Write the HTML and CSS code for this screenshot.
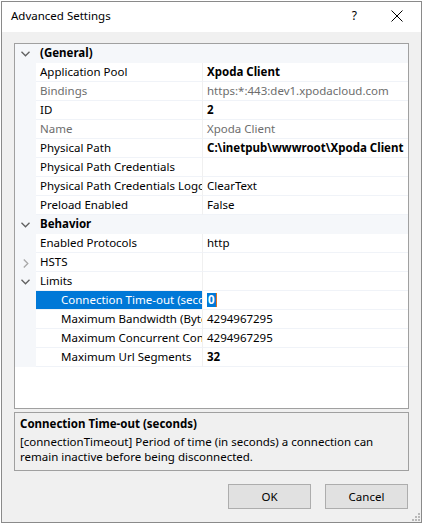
FILE: index.html
```html
<!DOCTYPE html>
<html>
<head>
<meta charset="utf-8">
<link rel="stylesheet" href="styles.css">
</head>
<body>
<div class="window">
  <div class="titlebar">
    <span class="title">Advanced Settings</span>
    <span class="help">?</span>
    <svg class="close" width="12" height="12" viewBox="0 0 12 12"><path d="M0.5 0.5L11.5 11.5M11.5 0.5L0.5 11.5" stroke="#000" stroke-width="1" fill="none"/></svg>
  </div>
  <div class="body">
    <div class="grid">
      <div class="row cat"><span class="gut"><svg class="chev" width="9" height="6" viewBox="0 0 9 6"><path d="M0.5 0.8L4.5 4.8L8.5 0.8" stroke="#606060" stroke-width="1.3" fill="none"/></svg></span><span class="cname">(General)</span></div>
      <div class="row"><span class="gut"></span><span class="name">Application Pool</span><span class="val b">Xpoda Client</span></div>
      <div class="row ro"><span class="gut"></span><span class="name">Bindings</span><span class="val">https:*:443:dev1.xpodacloud.com</span></div>
      <div class="row"><span class="gut"></span><span class="name">ID</span><span class="val b">2</span></div>
      <div class="row ro"><span class="gut"></span><span class="name">Name</span><span class="val">Xpoda Client</span></div>
      <div class="row"><span class="gut"></span><span class="name">Physical Path</span><span class="val b">C:\inetpub\wwwroot\Xpoda Client</span></div>
      <div class="row"><span class="gut"></span><span class="name">Physical Path Credentials</span><span class="val"></span></div>
      <div class="row"><span class="gut"></span><span class="name">Physical Path Credentials Logon Type</span><span class="val">ClearText</span></div>
      <div class="row"><span class="gut"></span><span class="name">Preload Enabled</span><span class="val">False</span></div>
      <div class="row cat"><span class="gut"><svg class="chev" width="9" height="6" viewBox="0 0 9 6"><path d="M0.5 0.8L4.5 4.8L8.5 0.8" stroke="#606060" stroke-width="1.3" fill="none"/></svg></span><span class="cname">Behavior</span></div>
      <div class="row"><span class="gut"></span><span class="name">Enabled Protocols</span><span class="val">http</span></div>
      <div class="row"><span class="gut"><svg class="chevr" width="6" height="9" viewBox="0 0 6 9"><path d="M0.8 0.5L4.8 4.5L0.8 8.5" stroke="#a8a8a8" stroke-width="1.3" fill="none"/></svg></span><span class="name">HSTS</span><span class="val"></span></div>
      <div class="row"><span class="gut"><svg class="chev" width="9" height="6" viewBox="0 0 9 6"><path d="M0.5 0.8L4.5 4.8L8.5 0.8" stroke="#606060" stroke-width="1.3" fill="none"/></svg></span><span class="name">Limits</span><span class="val"></span></div>
      <div class="row sel"><span class="gut"></span><span class="name sub">Connection Time-out (seconds)</span><span class="val"><span class="edit">0</span><span class="caret"></span></span></div>
      <div class="row"><span class="gut"></span><span class="name sub">Maximum Bandwidth (Bytes/second)</span><span class="val">4294967295</span></div>
      <div class="row"><span class="gut"></span><span class="name sub">Maximum Concurrent Connections</span><span class="val">4294967295</span></div>
      <div class="row"><span class="gut"></span><span class="name sub">Maximum Url Segments</span><span class="val b">32</span></div>
    </div>
    <div class="desc">
      <div class="dtitle">Connection Time-out (seconds)</div>
      <div class="dtext">[connectionTimeout] Period of time (in seconds) a connection can remain inactive before being disconnected.</div>
    </div>
    <div class="buttons">
      <button class="btn">OK</button>
      <button class="btn">Cancel</button>
    </div>
    <svg class="grip" width="8" height="8" viewBox="0 0 8 8">
      <rect x="6" y="0" width="2" height="2" fill="#b8b8b8"/>
      <rect x="3" y="3" width="2" height="2" fill="#b8b8b8"/>
      <rect x="6" y="3" width="2" height="2" fill="#b8b8b8"/>
      <rect x="0" y="6" width="2" height="2" fill="#b8b8b8"/>
      <rect x="3" y="6" width="2" height="2" fill="#b8b8b8"/>
      <rect x="6" y="6" width="2" height="2" fill="#b8b8b8"/>
    </svg>
  </div>
</div>
</body>
</html>
```
FILE: styles.css
```css
html, body {
  margin: 0;
  padding: 0;
  background: #ffffff;
}
body {
  font-family: "Noto Sans", "Open Sans", sans-serif;
  font-size: 11.5px;
  color: #000;
  padding: 1px 0 0 1px;
}
.window {
  width: 421px;
  height: 522px;
  box-sizing: border-box;
  border: 1px solid #8a8a8a;
  background: #f0f0f0;
  display: flex;
  flex-direction: column;
}
.titlebar {
  height: 30px;
  box-sizing: border-box;
  padding-bottom: 3px;
  background: #ffffff;
  display: flex;
  align-items: center;
  flex-shrink: 0;
}
.title {
  margin-left: 9px;
  font-size: 11.5px;
  flex: 1;
}
.help {
  font-size: 12px;
  margin-right: 34px;
}
.close {
  margin-right: 18px;
}
.body {
  flex: 1;
  position: relative;
  padding: 11px 12px 0 12px;
  display: flex;
  flex-direction: column;
}
.grid {
  height: 366px;
  box-sizing: border-box;
  border: 1px solid #a0a0a0;
  background: #ffffff;
  display: flex;
  flex-direction: column;
  flex-shrink: 0;
}
.row {
  height: 19px;
  display: flex;
  flex-shrink: 0;
  line-height: 18px;
}
.gut {
  width: 21px;
  flex-shrink: 0;
  background: #f5f7fa;
  display: flex;
  align-items: center;
  justify-content: center;
}
.chev {
  margin-top: 1px;
}
.chevr {
  margin-top: 1px;
}
.name {
  width: 167px;
  flex-shrink: 0;
  box-sizing: border-box;
  padding-left: 4px;
  border-right: 1px solid #f0f0f0;
  border-bottom: 1px solid #f0f3f8;
  white-space: nowrap;
  overflow: hidden;
}
.name.sub {
  padding-left: 25px;
}
.val {
  flex: 1;
  box-sizing: border-box;
  padding-left: 4px;
  border-bottom: 1px solid #f0f3f8;
  white-space: nowrap;
  overflow: hidden;
  display: flex;
  align-items: center;
}
.val.b {
  font-weight: bold;
}
.ro .name, .ro .val {
  color: #6d6d6d;
}
.cat {
  background: #f5f7fa;
}
.cname {
  padding-left: 4px;
  font-weight: bold;
}
.sel .name {
  background: #0078d7;
  color: #ffffff;
}
.edit {
  background: #0078d7;
  color: #ffffff;
  font-weight: bold;
  line-height: 14px;
  padding: 0 1px;
}
.caret {
  width: 1px;
  height: 14px;
  background: #e07020;
}
.desc {
  margin-top: 3px;
  height: 59px;
  box-sizing: border-box;
  border: 1px solid #a0a0a0;
  padding: 3px 5px 0 5px;
  flex-shrink: 0;
}
.dtitle {
  font-weight: bold;
  line-height: 15px;
}
.dtext {
  margin-top: 3px;
  line-height: 15px;
}
.buttons {
  margin-top: 13px;
  display: flex;
  justify-content: flex-end;
  gap: 14px;
  padding-right: 1px;
}
.btn {
  width: 83px;
  height: 25px;
  background: #e1e1e1;
  border: 1px solid #adadad;
  font-family: "Noto Sans", "Open Sans", sans-serif;
  font-size: 11.5px;
  color: #000;
  padding: 0;
}
.grip {
  position: absolute;
  right: 1px;
  bottom: 1px;
}
```
